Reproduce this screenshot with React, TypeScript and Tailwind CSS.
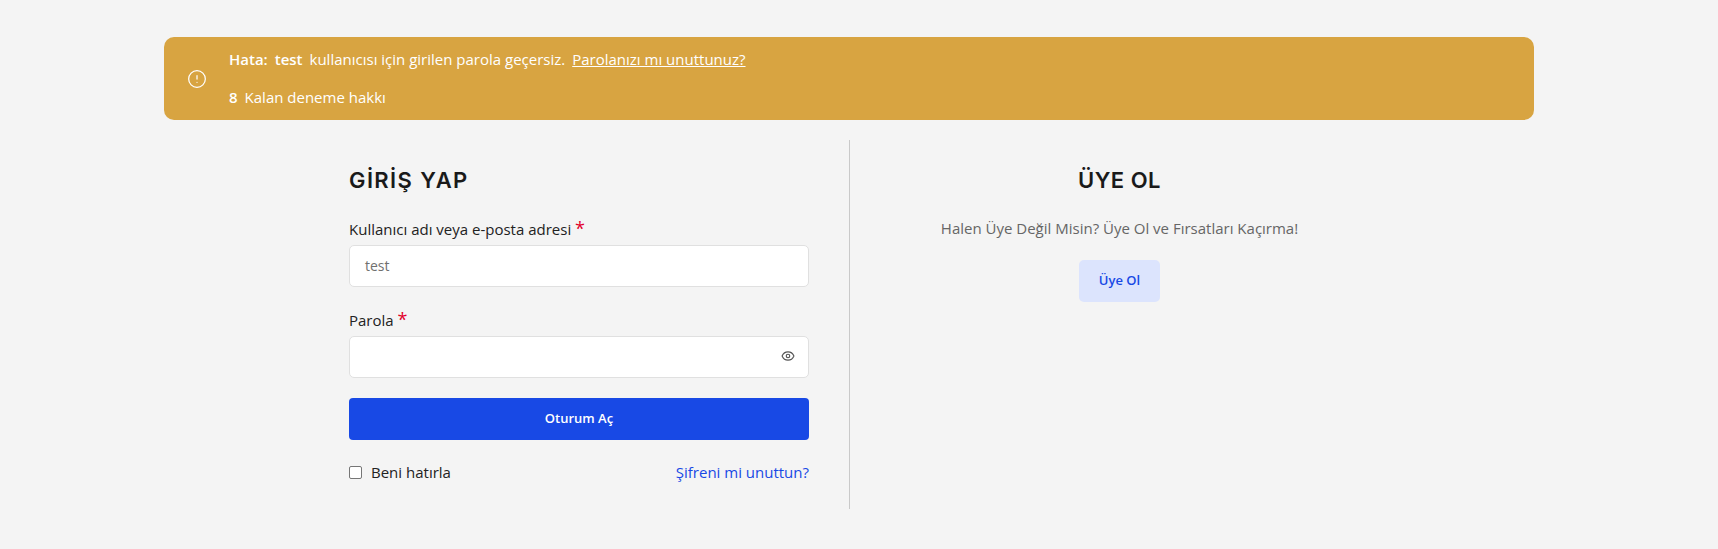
import { CircleAlert, Eye } from 'lucide-react';

const Label = ({ text }: { text: string }) => (
  <label className="block text-[15px] leading-[24px] text-[#222222] mb-[4px]">
    {text} <span className="text-[#e2002b] text-[18px] leading-[18px]">*</span>
  </label>
);

export default function App() {
  return (
    <div className="min-h-[549px] bg-[#f4f4f4] font-['Open_Sans',sans-serif] pt-[37px] pb-[40px] pl-[164px] pr-[184px]">
      <div className="flex items-center h-[83px] rounded-[10px] bg-[#d8a441] text-white text-[15px]">
        <CircleAlert className="w-[20px] h-[20px] ml-[23px] mr-[22px]" strokeWidth={1.5} />
        <div className="pb-[2px]">
          <div className="leading-[22px] mb-[16px]">
            <strong className="font-semibold">Hata:</strong>
            <strong className="font-semibold ml-[7px]">test</strong>
            <span className="ml-[7px]">kullanıcısı için girilen parola geçersiz.</span>
            <a className="underline ml-[7px]">Parolanızı mı unuttunuz?</a>
          </div>
          <div className="leading-[22px]">
            <strong className="font-semibold">8</strong>
            <span className="ml-[7px]">Kalan deneme hakkı</span>
          </div>
        </div>
      </div>

      <div className="flex w-[1080px] mx-auto mt-[20px] h-[369px]">
        <div className="w-[541px] pl-[40px] pr-[40px] pt-[27px] border-r border-[#c9c9c9]">
          <h2 className="font-['Inter',sans-serif] font-semibold text-[22px] leading-[26px] tracking-[1.4px] text-[#1a1a1a] mb-[24px]">GİRİŞ YAP</h2>
          <Label text="Kullanıcı adı veya e-posta adresi" />
          <div className="flex items-center h-[42px] rounded-[5px] border border-[#e0e0e0] bg-white px-[15px] pb-[2px] text-[14px] text-[#707070]">test</div>
          <div className="mt-[21px]">
            <Label text="Parola" />
          </div>
          <div className="flex items-center justify-end h-[42px] rounded-[5px] border border-[#e0e0e0] bg-white pr-[13px] pb-[2px]">
            <Eye className="w-[14px] h-[14px] text-[#555555]" strokeWidth={2} />
          </div>
          <button className="block w-full h-[42px] mt-[20px] rounded-[4px] bg-[#1849e5] text-white text-[13px] font-semibold">Oturum Aç</button>
          <div className="flex items-center justify-between mt-[20px]">
            <label className="flex items-center text-[15px] leading-[24px] text-[#222222]">
              <span className="w-[13px] h-[13px] rounded-[2px] border border-[#767676] bg-white mr-[9px]" />
              Beni hatırla
            </label>
            <a className="text-[15px] leading-[24px] text-[#1849e5]">Şifreni mi unuttun?</a>
          </div>
        </div>
        <div className="w-[539px] flex flex-col items-center pt-[27px]">
          <h2 className="font-['Inter',sans-serif] font-semibold text-[22px] leading-[26px] tracking-[0.5px] text-[#1a1a1a] mb-[23px]">ÜYE OL</h2>
          <p className="text-[15px] leading-[24px] text-[#666666]">Halen Üye Değil Misin? Üye Ol ve Fırsatları Kaçırma!</p>
          <button className="mt-[20px] w-[81px] h-[42px] rounded-[5px] bg-[#dce4fd] text-[#1849e5] text-[13px] font-semibold">Üye Ol</button>
        </div>
      </div>
    </div>
  );
}
